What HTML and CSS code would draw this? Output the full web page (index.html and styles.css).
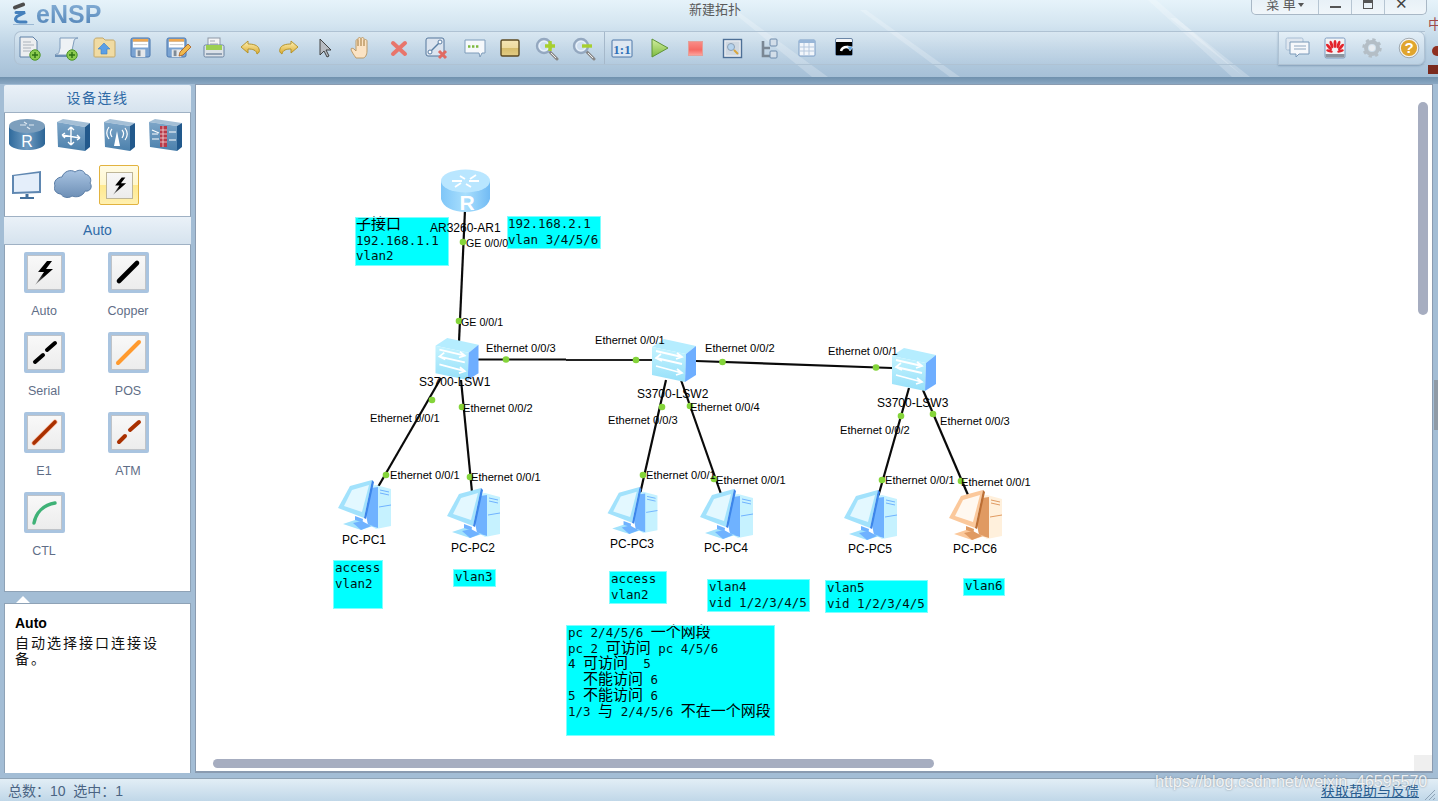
FILE: index.html
```html
<!DOCTYPE html>
<html lang="zh">
<head>
<meta charset="utf-8">
<title>eNSP</title>
<link rel="stylesheet" href="styles.css">
</head>
<body>
<svg class="defs" width="0" height="0" aria-hidden="true">
  <defs>
    <linearGradient id="gBody" x1="0" y1="0" x2="1" y2="0"><stop offset="0" stop-color="#7fc6f8"/><stop offset=".5" stop-color="#a9dffd"/><stop offset="1" stop-color="#72bbf4"/></linearGradient>
    <linearGradient id="gDark" x1="0" y1="0" x2="1" y2="0"><stop offset="0" stop-color="#2f6a9c"/><stop offset=".5" stop-color="#6f9cc2"/><stop offset="1" stop-color="#2b6495"/></linearGradient>
    <linearGradient id="gFront" x1="0" y1="0" x2="0" y2="1"><stop offset="0" stop-color="#c4f3ff"/><stop offset="1" stop-color="#97e0f9"/></linearGradient>
    <linearGradient id="gCube" x1="0" y1="0" x2="0" y2="1"><stop offset="0" stop-color="#7ea6c8"/><stop offset="1" stop-color="#4b80ac"/></linearGradient>
    <linearGradient id="gGold" x1="0" y1="0" x2="0" y2="1"><stop offset="0" stop-color="#fff3b8"/><stop offset="1" stop-color="#d9a92e"/></linearGradient>
    <linearGradient id="gBolt" x1="1" y1="0" x2="0" y2="1"><stop offset=".55" stop-color="#000"/><stop offset="1" stop-color="#b5b5b5"/></linearGradient>
    <linearGradient id="gCloud" x1="0" y1="0" x2="0" y2="1"><stop offset="0" stop-color="#a9c4e2"/><stop offset="1" stop-color="#6d8fb6"/></linearGradient>
    <linearGradient id="gPlay" x1="0" y1="0" x2="0" y2="1"><stop offset="0" stop-color="#d3eea0"/><stop offset="1" stop-color="#7cbb3f"/></linearGradient>
    <linearGradient id="gStop" x1="0" y1="0" x2="0" y2="1"><stop offset="0" stop-color="#f98d88"/><stop offset=".6" stop-color="#f66a64"/><stop offset="1" stop-color="#fda6a0"/></linearGradient>
    <linearGradient id="gTan" x1="0" y1="0" x2="0" y2="1"><stop offset="0" stop-color="#f4e4b4"/><stop offset=".5" stop-color="#eedb9f"/><stop offset=".51" stop-color="#d7bd6c"/><stop offset="1" stop-color="#e4cd85"/></linearGradient>

    <symbol id="pc" viewBox="0 0 53 51">
      <polygon class="pc-light" points="33,6 38,5 53,9 53,46 38,49 33,46"/>
      <polygon class="pc-mid" points="28,35 33,8 40,7 40,48 30,45"/>
      <path class="pc-line" d="M42 10l9 2M42 13l9 2M41 27l12-2"/>
      <polygon class="pc-light2" points="12,6 34,0 26,38 0,28"/>
      <polygon class="pc-screen" points="14,10 31,5 24,32 6,26"/>
      <polygon class="pc-dark" points="34,0 36,2 28,39 26,38"/>
      <polygon class="pc-mid" points="17,36 25,39 24,45 17,43"/>
      <polygon class="pc-light2" points="5,44 17,40 35,46 23,50"/>
      <polygon class="pc-mid" points="15,43 24,41 33,46 23,50"/>
    </symbol>

    <symbol id="sw" viewBox="0 0 44 43">
      <polygon fill="#b5edff" points="0,8 12,0 44,7 34,15"/>
      <polygon fill="url(#gFront)" points="0,8 34,15 33,43 0,36"/>
      <polygon fill="#6eaeff" points="34,15 44,7 44,36 33,43"/>
      <g fill="none" stroke="#fff" stroke-width="1.800">
        <path d="M4 12l26 6M25 14l5 4-6 2"/>
        <path d="M30 25L4 19M9 15l-5 4 6 3"/>
        <path d="M4 27l26 7M25 30l5 4-6 2"/>
      </g>
    </symbol>

    <symbol id="bolt" viewBox="0 0 40 40">
      <polygon fill="url(#gBolt)" points="23,9 14,20 20,20 11,33 29,17 22,17 28,9"/>
    </symbol>
    <symbol id="plus" viewBox="0 0 12 12">
      <circle cx="6" cy="6" r="5.200" fill="#8ccb4f" stroke="#4b9427"/>
      <path d="M6 3v6M3 6h6" stroke="#2c7015" stroke-width="1.400"/>
    </symbol>
    <symbol id="floppy" viewBox="0 0 22 22">
      <rect x="1" y="1" width="20" height="20" rx="2" fill="#7aa3d2" stroke="#4b77ad"/>
      <rect x="3" y="2" width="16" height="3" fill="#f0a850"/>
      <rect x="3" y="5" width="16" height="6" fill="#fff"/>
      <path d="M4 8h14" stroke="#ccc"/>
      <rect x="6" y="13" width="10" height="8" fill="#e4e7ea"/>
      <rect x="8" y="14" width="3" height="6" fill="#7f8b98"/>
    </symbol>
    <symbol id="mag" viewBox="0 0 24 24">
      <path d="M15 15l7 7" stroke="#888" stroke-width="3" stroke-linecap="round"/>
      <path d="M16 16l5 5" stroke="#eee" stroke-width="1"/>
      <circle cx="9" cy="9" r="7" fill="#e6f0fa" stroke="#94a8c0" stroke-width="2.400"/>
      <circle cx="9" cy="9" r="4" fill="#cfdff0"/>
    </symbol>
  </defs>
</svg>

<div class="app">
  <header class="header">
    <svg class="streaks" width="1438" height="77" viewBox="0 0 1438 77" aria-hidden="true">
      <polygon points="1148,0 1156,0 1244,77 1232,77"/>
      <polygon points="1170,18 1176,18 1250,77 1244,77"/>
      <polygon points="730,10 736,10 828,77 812,77"/>
      <polygon points="860,10 866,10 960,77 950,77"/>
    </svg>
    <div class="titlebar">
      <div class="brand">
        <svg class="logo" width="24" height="24" viewBox="0 0 24 24">
          <path d="M3 5.500l8-3" stroke="#4d4d4d" stroke-width="4" stroke-linecap="round"/>
          <path d="M4 10.500h9L5 14.500c-3 3-1 5.500 3 5.500h6" fill="none" stroke="#4580bc" stroke-width="3" stroke-linecap="round"/>
          <path d="M1 22.500h21" stroke="#9ab8d4" stroke-width="1"/>
        </svg>
        <span class="brand-name">eNSP</span>
      </div>
      <div class="doc-title">新建拓扑</div>
      <div class="win-btns">
        <span class="win-btn win-menu">菜 单<i class="caret"></i></span>
        <span class="win-btn"><i class="win-min"></i></span>
        <span class="win-btn"><i class="win-max"></i></span>
        <span class="win-btn win-close">✕</span>
      </div>
    </div>

    <div class="toolbar">
      <div class="tools">
        <span class="tool"><svg viewBox="0 0 28 28"><path d="M5 3h13l4 4v16H5z" fill="#eceef0" stroke="#5f80a6"/><path d="M8 8h8M8 11h11M8 14h8M8 17h8" stroke="#aab2bb"/><use href="#plus" x="14" y="15" width="12" height="12"/></svg></span>
        <span class="tool"><svg viewBox="0 0 28 28"><path d="M8 4h18c-3 0-4 2-4 3l-3 14H3l1-1h1c2 0 2-2 3-6z" fill="#eef2f5" stroke="#7f9cbc"/><path d="M3 22h15" stroke="#6d90b5" stroke-width="2"/><use href="#plus" x="14" y="15" width="12" height="12"/></svg></span>
        <span class="tool"><svg viewBox="0 0 28 28"><path d="M5 7c0-2 1-3 3-3h6l2 2h8c1 0 2 1 2 2v14c0 1-1 1-2 1H6c-1 0-1-1-1-1z" fill="#f0dba3" stroke="#c4a868"/><path d="M15 9l6 6h-3v5h-6v-5H9z" fill="#5b9fe6" stroke="#3d7fc4" stroke-width=".6"/></svg></span>
        <span class="tool"><svg viewBox="0 0 28 28"><use href="#floppy" x="4" y="3" width="21" height="21"/></svg></span>
        <span class="tool"><svg viewBox="0 0 28 28"><use href="#floppy" x="3" y="3" width="21" height="21"/><path d="M16 22l1-4 8-8 3 3-8 8z" fill="#f0b94c" stroke="#a85a20" stroke-width=".8"/></svg></span>
        <span class="tool"><svg viewBox="0 0 28 28"><rect x="8" y="4" width="12" height="11" fill="#f3f4f6" stroke="#8d98a5"/><path d="M10 7h5M10 10h8" stroke="#a0a8b0"/><rect x="4" y="11" width="20" height="12" rx="1.500" fill="#dbe1e8" stroke="#6b83a0"/><rect x="6" y="11" width="16" height="5" fill="#9ccf52"/><path d="M6 20h16" stroke="#7a8da3" stroke-width="1.500"/></svg></span>
        <span class="tool"><svg viewBox="0 0 28 28"><path d="M11 7L4 13l7 6v-4c5 0 8 1 9 5 2-1 3-3 2-5-1-4-6-5-11-5z" fill="url(#gGold)" stroke="#b08d22" stroke-width=".9"/></svg></span>
        <span class="tool"><svg viewBox="0 0 28 28"><path d="M17 7l7 6-7 6v-4c-5 0-8 1-9 5-2-1-3-3-2-5 1-4 6-5 11-5z" fill="url(#gGold)" stroke="#b08d22" stroke-width=".9"/></svg></span>
        <span class="tool"><svg viewBox="0 0 28 28"><path d="M9 5v16l4-4 3 6 2-1-3-6h5z" fill="#b8bcc2" stroke="#333" stroke-width=".9"/></svg></span>
        <span class="tool"><svg viewBox="0 0 28 28"><path d="M8 24c-2-3-5-7-5-9 0-1 2-1 3 0l2 2V7c0-2 2-2 2 0v5V5c0-2 3-2 3 0v7V5c0-2 3-2 3 0v7V7c0-2 3-2 3 0v10c0 4-2 7-4 7z" fill="#fbe3c4" stroke="#b8945f" stroke-width=".9"/></svg></span>
        <span class="tool"><svg viewBox="0 0 28 28"><path d="M8 9l12 11M20 9L8 20" stroke="#e8756b" stroke-width="4" stroke-linecap="round"/></svg></span>
        <span class="tool"><svg viewBox="0 0 28 28"><rect x="4" y="4" width="18" height="18" rx="2" fill="#dbe4ef" stroke="#54769c"/><path d="M8 18l10-10" stroke="#5a7ea4" stroke-width="1.500"/><circle cx="8" cy="18" r="2" fill="#fff" stroke="#5a7ea4"/><circle cx="18" cy="8" r="2" fill="#fff" stroke="#5a7ea4"/><path d="M17 17l7 7M24 17l-7 7" stroke="#e06a62" stroke-width="3"/></svg></span>
        <span class="tool"><svg viewBox="0 0 28 28"><path d="M6 6h20v13h-3l-2 4-1-4H6z" fill="#f5f8fb" stroke="#7e9cba"/><path d="M9 12.500h12" stroke="#7cb83e" stroke-width="2.400" stroke-dasharray="2.400 1.600"/></svg></span>
        <span class="tool"><svg viewBox="0 0 28 28"><rect x="5" y="6" width="18" height="16" rx="1.500" fill="url(#gTan)" stroke="#5c4a22" stroke-width="1.400"/></svg></span>
        <span class="tool"><svg viewBox="0 0 28 28"><use href="#mag" x="2" y="3" width="24" height="24"/><path d="M12 12h10M17 7v10" stroke="#a7cf2f" stroke-width="3.400"/></svg></span>
        <span class="tool"><svg viewBox="0 0 28 28"><use href="#mag" x="2" y="3" width="24" height="24"/><path d="M12 12h10" stroke="#a7cf2f" stroke-width="3.400"/></svg></span>
      </div>
      <div class="tools tools-sep">
        <span class="tool"><svg viewBox="0 0 28 28"><rect x="4" y="6" width="20" height="17" rx="1" fill="#dde7f2" stroke="#4d77a8"/><text class="ratio" x="14" y="19.500">1:1</text></svg></span>
        <span class="tool"><svg viewBox="0 0 28 28"><polygon points="7,5 23,14 7,23" fill="url(#gPlay)" stroke="#5f9436"/></svg></span>
        <span class="tool"><svg viewBox="0 0 28 28"><rect x="6.500" y="7.500" width="14" height="14" fill="url(#gStop)" stroke="#e3a09a"/></svg></span>
        <span class="tool"><svg viewBox="0 0 28 28"><rect x="4.500" y="5.500" width="18" height="18" fill="#eef1f4" stroke="#4d6f96" stroke-width="1.400"/><rect x="6.500" y="7.500" width="14" height="14" fill="#cfd8e2"/><circle cx="12" cy="13" r="3.500" fill="#b5d3ee" stroke="#8da0b4"/><path d="M15 16l4 4" stroke="#d8a53c" stroke-width="2"/></svg></span>
        <span class="tool"><svg viewBox="0 0 28 28"><path d="M7 7v15h7M7 14h7" fill="none" stroke="#7a8794" stroke-width="2.600"/><rect x="14" y="5" width="7" height="7" rx="1" fill="#d3dee9" stroke="#6c8aab"/><rect x="14" y="17" width="7" height="7" rx="1" fill="#d3dee9" stroke="#6c8aab"/></svg></span>
        <span class="tool"><svg viewBox="0 0 28 28"><rect x="6" y="6" width="16" height="16" rx="1" fill="#f2f6fb" stroke="#7b9cc4"/><rect x="6" y="6" width="16" height="3" fill="#98b6d8"/><path d="M6 13h16M6 17h16M11 9v13M16 9v13" stroke="#b6c8de"/></svg></span>
        <span class="tool"><svg viewBox="0 0 28 28"><rect x="5.500" y="4.500" width="17" height="17" rx="1.500" fill="#f3f5f8" stroke="#6b86a6"/><rect x="6" y="8" width="16" height="13" fill="#000"/><path d="M11 17c1-4 6-5 8-3" fill="none" stroke="#fff" stroke-width="2.400"/><path d="M17 12l6 1-3 4z" fill="#5ea7e8" stroke="#fff" stroke-width=".6"/></svg></span>
      </div>
      <div class="tools tools-right">
        <span class="tool"><svg viewBox="0 0 28 28"><rect x="2" y="4" width="17" height="12" rx="1.500" fill="#dfe7f0" stroke="#a8bed4"/><path d="M6 8h19v12H15l-3 3v-3H6z" fill="#f6f8fb" stroke="#7b99b8"/><path d="M10 12h12M10 15h12" stroke="#8ea6bf"/></svg></span>
        <span class="tool"><svg viewBox="0 0 28 28"><rect x="4" y="4" width="20" height="20" rx="1.500" fill="#f2f3f5" stroke="#7e9dc2"/><rect x="4.500" y="20" width="19" height="3.500" fill="#8c95a0"/><g fill="#e3242b"><ellipse cx="14" cy="10" rx="1.500" ry="4"/><ellipse cx="10.500" cy="10.500" rx="1.500" ry="4" transform="rotate(-18 10.500 10.500)"/><ellipse cx="17.500" cy="10.500" rx="1.500" ry="4" transform="rotate(18 17.500 10.500)"/><ellipse cx="8" cy="13" rx="1.500" ry="4" transform="rotate(-42 8 13)"/><ellipse cx="20" cy="13" rx="1.500" ry="4" transform="rotate(42 20 13)"/><ellipse cx="8.500" cy="17" rx="1.400" ry="3.400" transform="rotate(-72 8.500 17)"/><ellipse cx="19.500" cy="17" rx="1.400" ry="3.400" transform="rotate(72 19.500 17)"/></g></svg></span>
        <span class="tool"><svg viewBox="0 0 28 28"><circle cx="14" cy="14" r="6" fill="none" stroke="#b4bec6" stroke-width="4"/><circle cx="14" cy="14" r="8.200" fill="none" stroke="#b4bec6" stroke-width="3" stroke-dasharray="3.200 3.240"/><circle cx="14" cy="14" r="3" fill="#e9edf1"/></svg></span>
        <span class="tool"><svg viewBox="0 0 28 28"><circle cx="14" cy="14" r="8.800" fill="#e0a52e" stroke="#f2f2f2" stroke-width="1.400"/><circle cx="14" cy="14" r="9.800" fill="none" stroke="#8a8f94" stroke-width=".7"/><text class="help" x="14" y="19">?</text></svg></span>
      </div>
    </div>
  </header>

  <main class="main">
    <aside class="sidebar">
      <h2 class="side-head side-head-cn">设备连线</h2>
      <section class="devices">
        <svg class="dev" width="36" height="32" viewBox="0 0 36 32"><path d="M0 7v18c2 4 10 6 18 6s16-2 18-6V7z" fill="url(#gDark)"/><ellipse cx="18" cy="7" rx="18" ry="7" fill="#7d9fbd"/><path d="M11 6h6M25 6h-5M15 3l3 2M21 10l-3-2" stroke="#dfe9f2" stroke-width="1.200"/><text class="dev-r" x="18" y="28">R</text></svg>
        <svg class="dev" width="33" height="32" viewBox="0 0 33 32"><polygon fill="#a4bfd6" points="0,3 6,0 33,4 28,8"/><polygon fill="url(#gCube)" points="0,3 28,8 28,32 1,28"/><polygon fill="#22598c" points="28,8 33,4 33,28 28,32"/><path d="M14 8v18M5 16l18 3M14 8l-3 3M14 8l3 3M14 26l-3-3M14 26l3-3M5 16l3-2M5 16l3 3M23 19l-3-3M23 19l-3 2" stroke="#fff" stroke-width="1.400" fill="none"/></svg>
        <svg class="dev" width="31" height="32" viewBox="0 0 31 32"><polygon fill="#a4bfd6" points="0,3 6,0 31,4 26,7"/><polygon fill="url(#gCube)" points="0,3 26,7 26,32 1,28"/><polygon fill="#22598c" points="26,7 31,4 31,28 26,32"/><path d="M13 12l-3 15h6z" fill="#fff"/><path d="M8 10c-2 2-2 5 0 8M5 8c-3 4-3 8 0 12M18 11c2 2 2 5 0 8M21 9c3 4 3 8 0 12" stroke="#fff" stroke-width="1.200" fill="none"/></svg>
        <svg class="dev" width="33" height="32" viewBox="0 0 33 32"><polygon fill="#a4bfd6" points="0,3 6,0 33,4 28,7"/><polygon fill="url(#gCube)" points="0,3 28,7 28,32 1,28"/><polygon fill="#22598c" points="28,7 33,4 33,28 28,32"/><rect x="11" y="7" width="7" height="21" fill="#b83a4a"/><path d="M11 11h7M11 15h7M11 19h7M11 23h7M14 7v21" stroke="#f2d8da" stroke-width=".8"/><path d="M3 11l7 3M3 20h7M20 13h7M20 21h7M3 15h6" stroke="#fff" stroke-width="1.100"/></svg>
        <svg class="dev" width="30" height="28" viewBox="0 0 30 28"><polygon fill="#5f87b1" points="0,4 29,0 29,22 0,23"/><polygon fill="#e4eefa" points="2,5 27,2 27,20 2,21"/><path d="M15 23v3" stroke="#44709c" stroke-width="3"/><path d="M8 27h14" stroke="#44709c" stroke-width="2"/></svg>
        <svg class="dev" width="38" height="32" viewBox="0 0 38 32"><path d="M8 8c2-6 9-8 13-5 4-3 9-2 10 2 5 1 7 6 5 9 3 4 0 9-5 8-2 5-8 7-13 5-4 3-10 1-11-2-5 0-8-5-6-8-2-4 2-9 7-9z" fill="url(#gCloud)" stroke="#5a7da6"/></svg>
        <span class="dev-selected"><span class="tile-inner"><svg width="25" height="25" viewBox="3 3 34 34"><use href="#bolt" width="40" height="40"/></svg></span></span>
      </section>
      <h2 class="side-head">Auto</h2>
      <section class="links">
        <div class="link">
          <span class="tile"><svg viewBox="3 3 35 35"><use href="#bolt" width="40" height="40"/></svg></span>
          <span class="link-name">Auto</span>
        </div>
        <div class="link">
          <span class="tile"><svg viewBox="3 3 35 35"><path d="M11 29L29 11" stroke="#000" stroke-width="4.600" stroke-linecap="round"/></svg></span>
          <span class="link-name">Copper</span>
        </div>
        <div class="link">
          <span class="tile"><svg viewBox="3 3 35 35"><path d="M11 30l8-7M23 18l8-7" stroke="#000" stroke-width="4" stroke-linecap="round"/></svg></span>
          <span class="link-name">Serial</span>
        </div>
        <div class="link">
          <span class="tile"><svg viewBox="3 3 35 35"><path d="M10 31L31 10" stroke="#ff9a2e" stroke-width="4" stroke-linecap="round"/></svg></span>
          <span class="link-name">POS</span>
        </div>
        <div class="link">
          <span class="tile"><svg viewBox="3 3 35 35"><path d="M10 31L31 10" stroke="#ff9a70" stroke-width="5" stroke-linecap="round" opacity=".6"/><path d="M10 31L31 10" stroke="#a93000" stroke-width="3.600" stroke-linecap="round"/></svg></span>
          <span class="link-name">E1</span>
        </div>
        <div class="link">
          <span class="tile"><svg viewBox="3 3 35 35"><path d="M11 30l6-6M22 18l9-8" stroke="#a93000" stroke-width="4" stroke-linecap="round"/></svg></span>
          <span class="link-name">ATM</span>
        </div>
        <div class="link">
          <span class="tile"><svg viewBox="3 3 35 35"><path d="M10 31C12 20 20 13 31 11" fill="none" stroke="#3fb277" stroke-width="3.400" stroke-linecap="round"/></svg></span>
          <span class="link-name">CTL</span>
        </div>
      </section>
      <section class="tip">
        <strong class="tip-title">Auto</strong>
        <p class="tip-text">自动选择接口连接设备。</p>
      </section>
    </aside>

    <div class="canvas">
      <div class="note n1"><span class="cjk">子接口</span>
192.168.1.1
vlan2</div>
      <div class="note n2">192.168.2.1
vlan 3/4/5/6</div>
      <div class="note n3">access
vlan2</div>
      <div class="note n4">vlan3</div>
      <div class="note n5">access
vlan2</div>
      <div class="note n6">vlan4
vid 1/2/3/4/5</div>
      <div class="note n7">vlan5
vid 1/2/3/4/5</div>
      <div class="note n8">vlan6</div>
      <div class="note n9">pc 2/4/5/6 <span class="cjk">一个网段</span>
pc 2 <span class="cjk">可访问</span> pc 4/5/6
4 <span class="cjk">可访问</span>  5
  <span class="cjk">不能访问</span> 6
5 <span class="cjk">不能访问</span> 6
1/3 <span class="cjk">与</span> 2/4/5/6 <span class="cjk">不在一个网段</span></div>

      <svg class="topology" width="1236" height="687" viewBox="196 85 1236 687">
        <g class="wire">
          <path d="M465 210L459 342"/>
          <path d="M478 359.500H566"/>
          <path class="wire-thin" d="M566 360H652"/>
          <path d="M696 361L892 368"/>
          <path d="M441 378L378 487"/>
          <path d="M461 380L472 492"/>
          <path d="M666 380L640 494"/>
          <path d="M681 380L721 494"/>
          <path d="M909 388L878 497"/>
          <path d="M923 390L968 495"/>
        </g>

        <g>
          <path d="M441 181v18c2 8 12 13 24.500 13s22.500-5 24.500-13v-18z" fill="url(#gBody)"/>
          <ellipse cx="465.500" cy="181" rx="24.500" ry="11.500" fill="#b9e6ff"/>
          <path d="M452 181h10M479 181h-10M460 176l5 3M471 187l-5-3M455 187l6-4M476 175l-6 4" stroke="#fff" stroke-width="1.800"/>
          <text class="router-r" x="467" y="210">R</text>
        </g>
        <use href="#sw" x="435" y="338" width="44" height="42"/>
        <use href="#sw" x="652" y="339" width="44" height="43"/>
        <use href="#sw" x="892" y="348" width="44" height="43"/>
        <use href="#pc" x="338" y="480" width="53" height="51"/>
        <use href="#pc" x="447" y="488" width="53" height="51"/>
        <use href="#pc" x="606" y="487" width="53" height="48"/>
        <use href="#pc" x="700" y="489" width="53" height="51"/>
        <use href="#pc" x="844" y="490" width="53" height="51"/>
        <use class="pc-orange" href="#pc" x="949" y="490" width="53" height="51"/>

        <g class="port">
          <circle cx="463" cy="242" r="3.300"/><circle cx="459" cy="321" r="3.300"/>
          <circle cx="506" cy="359.500" r="3.300"/><circle cx="636" cy="360" r="3.300"/>
          <circle cx="722.500" cy="362" r="3.300"/><circle cx="876" cy="367.500" r="3.300"/>
          <circle cx="432" cy="400" r="3.300"/><circle cx="386" cy="475" r="3.300"/>
          <circle cx="462" cy="407" r="3.300"/><circle cx="470" cy="477" r="3.300"/>
          <circle cx="662" cy="407" r="3.300"/><circle cx="643" cy="475" r="3.300"/>
          <circle cx="690" cy="406" r="3.300"/><circle cx="714" cy="479" r="3.300"/>
          <circle cx="901" cy="416" r="3.300"/><circle cx="882" cy="480" r="3.300"/>
          <circle cx="933" cy="414" r="3.300"/><circle cx="961" cy="481" r="3.300"/>
        </g>

        <g class="label">
          <text class="dev-name" x="430" y="232">AR3260-AR1</text>
          <text class="ge" x="466" y="247">GE 0/0/0</text>
          <text class="ge" x="461" y="326">GE 0/0/1</text>
          <text x="486" y="352">Ethernet 0/0/3</text>
          <text x="595" y="344">Ethernet 0/0/1</text>
          <text x="705" y="352">Ethernet 0/0/2</text>
          <text x="828" y="355">Ethernet 0/0/1</text>
          <text class="dev-name" x="419" y="386">S3700-LSW1</text>
          <text class="dev-name" x="637" y="398">S3700-LSW2</text>
          <text class="dev-name" x="877" y="407">S3700-LSW3</text>
          <text x="370" y="422">Ethernet 0/0/1</text>
          <text x="463" y="412">Ethernet 0/0/2</text>
          <text x="608" y="424">Ethernet 0/0/3</text>
          <text x="690" y="411">Ethernet 0/0/4</text>
          <text x="840" y="434">Ethernet 0/0/2</text>
          <text x="940" y="425">Ethernet 0/0/3</text>
          <text x="390" y="479">Ethernet 0/0/1</text>
          <text x="471" y="481">Ethernet 0/0/1</text>
          <text x="646" y="479">Ethernet 0/0/1</text>
          <text x="716" y="484">Ethernet 0/0/1</text>
          <text x="885" y="484">Ethernet 0/0/1</text>
          <text x="961" y="486">Ethernet 0/0/1</text>
          <text class="dev-name" x="342" y="544">PC-PC1</text>
          <text class="dev-name" x="451" y="552">PC-PC2</text>
          <text class="dev-name" x="610" y="548">PC-PC3</text>
          <text class="dev-name" x="704" y="552">PC-PC4</text>
          <text class="dev-name" x="848" y="553">PC-PC5</text>
          <text class="dev-name" x="953" y="553">PC-PC6</text>
        </g>
      </svg>

      <div class="vbar"></div>
      <div class="hbar"></div>
      <div class="corner"></div>
    </div>
  </main>

  <footer class="status">
    <span class="status-count">总数：10  选中：1</span>
    <a class="status-link" href="#">获取帮助与反馈</a>
    <svg class="grip" width="12" height="12" viewBox="0 0 12 12"><path d="M1 11L11 1M5 11l6-6M9 11l2-2" stroke="#8ea3b6"/></svg>
  </footer>

  <div class="behind behind-a">中</div>
  <div class="behind behind-b"></div>
  <div class="behind behind-c"></div>
  <div class="behind behind-d"></div>
  <div class="watermark">https://blog.csdn.net/weixin_46595570</div>
</div>
</body>
</html>
```

FILE: styles.css
```css
* { box-sizing: border-box; }
html, body { margin: 0; padding: 0; }
body {
  width: 1438px;
  height: 801px;
  overflow: hidden;
  font-family: "Liberation Sans", "Noto Sans CJK SC", sans-serif;
  background: #a3bdd5;
}
.defs { position: absolute; }

.app {
  position: relative;
  width: 1438px;
  height: 801px;
  display: flex;
  flex-direction: column;
  overflow: hidden;
  background: #a3bdd5;
}

/* header */
.header {
  position: relative;
  height: 84px;
  flex: none;
  padding-bottom: 19px;
  background:
    linear-gradient(#6f90ad, #8aa8c3) 0 77px / 100% 7px no-repeat,
    linear-gradient(#e6f3fa 0, #d5e6f1 30%, #b9d0e3 65%, #a6c0d7 100%) 0 0 / 100% 77px no-repeat;
}
.streaks { position: absolute; left: 0; top: 0; }
.streaks polygon { fill: #fff; fill-opacity: .22; }

.titlebar {
  position: relative;
  height: 31px;
  display: flex;
  align-items: flex-start;
}
.brand {
  width: 179px;
  height: 31px;
  padding-left: 12px;
  display: flex;
  align-items: flex-start;
}
.logo { margin-top: 2px; flex: none; }
.brand-name {
  font-size: 25px;
  font-weight: 700;
  line-height: 28px;
  background: linear-gradient(#8ab2d8, #4f82b6);
  -webkit-background-clip: text;
  background-clip: text;
  color: transparent;
}
.doc-title {
  flex: 1;
  text-align: center;
  font-size: 13px;
  line-height: 16px;
  padding-top: 2px;
  color: #5a5a5a;
}
.win-btns {
  width: 176px;
  height: 15px;
  margin-right: 11px;
  display: flex;
  border: 1px solid #a9b8c6;
  border-top: 0;
  border-radius: 0 0 5px 5px;
  background: linear-gradient(#e8f1f7, #f0f6fa);
  overflow: hidden;
}
.win-btn {
  flex: none;
  width: 33px;
  height: 14px;
  border-left: 1px solid #b6c5d2;
  display: flex;
  align-items: center;
  justify-content: center;
  color: #555;
  font-size: 14px;
}
.win-menu {
  width: 66px;
  border-left: 0;
  font-size: 13px;
  line-height: 8px;
  padding-bottom: 4px;
}
.caret {
  width: 0;
  height: 0;
  margin-left: 2px;
  border: 3.500px solid transparent;
  border-top: 4px solid #555;
  border-bottom: 0;
}
.win-min { width: 11px; height: 2px; background: #555; margin-top: 0; }
.win-max { width: 10px; height: 9px; border: 1px solid #555; border-top: 3px solid #555; margin-top: -5px; }
.win-close { padding-bottom: 7px; font-size: 15px; color: #444; }

.toolbar {
  position: relative;
  height: 34px;
  margin: 0 13px 0 14px;
  display: flex;
  align-items: center;
  border: 1px solid #afc2d3;
  border-right: 0;
  border-radius: 7px 0 0 7px;
  background: linear-gradient(rgba(255, 255, 255, .25), rgba(255, 255, 255, .05));
}
.tools { display: flex; gap: 9px; height: 100%; align-items: center; }
.tool { width: 28px; height: 28px; flex: none; display: block; }
.tool svg { display: block; width: 28px; height: 28px; }
.tools-sep {
  margin-left: 6px;
  padding-left: 3px;
  border-left: 1px solid #a5b8ca;
}
.tools-right {
  margin-left: auto;
  width: 147px;
  height: 34px;
  margin-top: -1px;
  margin-bottom: -1px;
  padding-left: 5px;
  border: 1px solid #afc2d3;
  border-radius: 0 7px 7px 0;
  background: linear-gradient(#e4eff7, #bcd2e4);
  box-shadow: 0 1px 2px rgba(90, 120, 150, .5);
}
.ratio { font: 700 13px "Liberation Serif", serif; fill: #2f70b8; text-anchor: middle; }
.help { font: 700 15px "Liberation Sans", sans-serif; fill: #fff; text-anchor: middle; }

/* main */
.main {
  flex: 1;
  min-height: 0;
  display: flex;
  padding: 0 6px 5px 4px;
}
.sidebar {
  width: 187px;
  flex: none;
  display: flex;
  flex-direction: column;
  margin-top: 1px;
}
.side-head {
  margin: 0;
  height: 28px;
  flex: none;
  text-align: center;
  font-size: 14px;
  line-height: 27px;
  font-weight: 400;
  color: #2f6aa6;
  border-bottom: 1px solid #9fb1c4;
  background: linear-gradient(#eaf1f8, #d6e3ee);
}
.side-head-cn { letter-spacing: 1.500px; border-radius: 2px 2px 0 0; }
.devices {
  height: 104px;
  flex: none;
  padding: 0 0 9px 0;
  display: grid;
  grid-template-columns: repeat(4, 44px);
  grid-template-rows: 44px 44px;
  gap: 6px 2px;
  justify-items: center;
  align-items: center;
  background: #fff;
  border-left: 1px solid #8ea2b6;
  border-right: 1px solid #8ea2b6;
  border-bottom: 1px solid #9fb1c4;
}
.dev-r { font: 400 16px "Liberation Sans", sans-serif; fill: #fff; text-anchor: middle; }
.dev-selected {
  width: 40px;
  height: 40px;
  display: flex;
  align-items: center;
  justify-content: center;
  border: 1px solid #e2b33f;
  border-radius: 2px;
  background: linear-gradient(#fffbe6 0, #fff7cc 50%, #ffe98e 50%, #fff0b0 100%);
}
.tile-inner {
  width: 27px;
  height: 27px;
  display: flex;
  align-items: center;
  justify-content: center;
  border: 1px solid #bdb598;
  background: linear-gradient(#f7f7f7, #ececec);
  overflow: hidden;
}
.links {
  height: 347px;
  flex: none;
  padding: 7px 0 0 0;
  display: grid;
  grid-template-columns: 78px 78px;
  grid-auto-rows: 80px;
  column-gap: 6px;
  align-content: start;
  justify-items: center;
  background: #fff;
  border: 1px solid #8ea2b6;
  border-top: 0;
}
.link { display: flex; flex-direction: column; align-items: center; }
.tile {
  width: 41px;
  height: 41px;
  display: block;
  border: 3px solid #a9c4e0;
  border-radius: 2px;
  background: linear-gradient(#f9f9f9, #ececec);
  box-shadow: inset 0 0 0 1px #bfc3c8;
}
.tile svg { display: block; width: 35px; height: 35px; }
.link-name {
  margin-top: 11px;
  font-size: 12.500px;
  line-height: 14px;
  color: #5f6e87;
}
.tip {
  position: relative;
  flex: 1;
  margin-top: 11px;
  padding: 11px 10px 0 10px;
  background: #fff;
  border: 1px solid #8ea2b6;
  border-bottom: 0;
}
.tip::before {
  content: "";
  position: absolute;
  left: 11px;
  top: -8px;
  border: 7px solid transparent;
  border-top: 0;
  border-bottom: 7px solid #fff;
}
.tip-title { display: block; font-size: 14px; line-height: 16px; color: #000; }
.tip-text {
  margin: 4px 0 0;
  font-size: 14px;
  line-height: 16px;
  letter-spacing: 2px;
  color: #111;
}

/* canvas */
.canvas {
  position: relative;
  flex: none;
  width: 1238px;
  margin-left: 4px;
  background: #fff;
  border: 1px solid #8a9bb0;
  border-width: 1px 1px 2px 1px;
  overflow: hidden;
}
.topology { position: absolute; left: 0; top: 0; }
.wire path { stroke: #0a0a0a; stroke-width: 2.200; fill: none; }
.wire .wire-thin { stroke: #222; stroke-width: 2; }
.port circle { fill: #84d43a; }
.label text {
  font: 11.100px "Liberation Sans", sans-serif;
  fill: #000;
}
.label .dev-name { font-size: 12px; }
.label .ge { font-size: 10.700px; }
.router-r { font: 700 21px "Liberation Sans", sans-serif; fill: #fff; text-anchor: middle; }

/* PC colours */
.pc-light { fill: var(--pc-light, #c6f2ff); }
.pc-light2 { fill: var(--pc-light2, #a2e2fc); }
.pc-mid { fill: var(--pc-mid, #6fb2ff); }
.pc-dark { fill: var(--pc-dark, #3d86ea); }
.pc-screen { fill: var(--pc-screen, #e3f8ff); }
.pc-line { fill: none; stroke: var(--pc-mid, #6fb2ff); stroke-width: 1; }
.pc-orange {
  --pc-light: #fff0dc;
  --pc-light2: #fbc89b;
  --pc-mid: #e09a62;
  --pc-dark: #bc6f35;
  --pc-screen: #fff8f0;
}

/* notes on the canvas */
.note {
  position: absolute;
  padding: 0 0 0 2px;
  background: #00ffff;
  outline: 1px solid #7dffff;
  outline-offset: -1px;
  font-family: "DejaVu Sans Mono", "Noto Sans CJK SC", monospace;
  font-size: 12.500px;
  line-height: 15.700px;
  white-space: pre;
  color: #001414;
}
.cjk { font-family: "Noto Sans CJK SC", sans-serif; font-size: 15px; line-height: 0; color: #000; }
.n1 { left: 159px; top: 132px; width: 94px; height: 49px; padding-left: 1px; }
.n2 { left: 311px; top: 131px; width: 94px; height: 33px; padding-left: 1px; }
.n3 { left: 137px; top: 475px; width: 50px; height: 49px; }
.n4 { left: 257px; top: 484px; width: 43px; height: 18px; }
.n5 { left: 413px; top: 486px; width: 58px; height: 33px; }
.n6 { left: 511px; top: 494px; width: 103px; height: 33px; }
.n7 { left: 629px; top: 495px; width: 103px; height: 33px; }
.n8 { left: 767px; top: 493px; width: 42px; height: 18px; }
.n9 { left: 370px; top: 540px; width: 209px; height: 111px; }

.vbar {
  position: absolute;
  left: 1222px;
  top: 17px;
  width: 10px;
  height: 213px;
  border-radius: 5px;
  background: #a6adc0;
}
.hbar {
  position: absolute;
  left: 17px;
  top: 674px;
  width: 721px;
  height: 9px;
  border-radius: 5px;
  background: #a6adc0;
}
.corner {
  position: absolute;
  left: 1218px;
  top: 670px;
  width: 18px;
  height: 17px;
  background: #efefef;
}

/* status */
.status {
  position: relative;
  height: 23px;
  flex: none;
  display: flex;
  align-items: center;
  justify-content: space-between;
  padding: 0 19px 0 8px;
  border-top: 1px solid #8fa3b5;
  background: linear-gradient(#e2eef6, #c0d7e8);
}
.status-count { font-size: 14px; color: #4a6483; white-space: pre; }
.status-link { font-size: 14px; color: #285c8e; text-decoration: underline; }
.grip { position: absolute; right: 2px; bottom: 0; }

/* the other window behind, seen at the right edge */
.behind { position: absolute; }
.behind-a { left: 1428px; top: 16px; font-size: 14px; line-height: 16px; color: #a04a4a; }
.behind-b { left: 1432px; top: 46px; width: 6px; height: 10px; border-radius: 6px 0 0 6px; background: #8f2f20; }
.behind-c { left: 1428px; top: 65px; width: 10px; height: 9px; background: #7a2a1e; }
.behind-d { left: 1434px; top: 380px; width: 4px; height: 50px; background: #8f9aa6; }
.watermark {
  position: absolute;
  left: 1155px;
  top: 773px;
  font-size: 16px;
  line-height: 18px;
  color: rgba(255, 255, 255, .85);
  text-shadow: 0 0 2px rgba(100, 110, 120, .75);
  white-space: nowrap;
}
```
